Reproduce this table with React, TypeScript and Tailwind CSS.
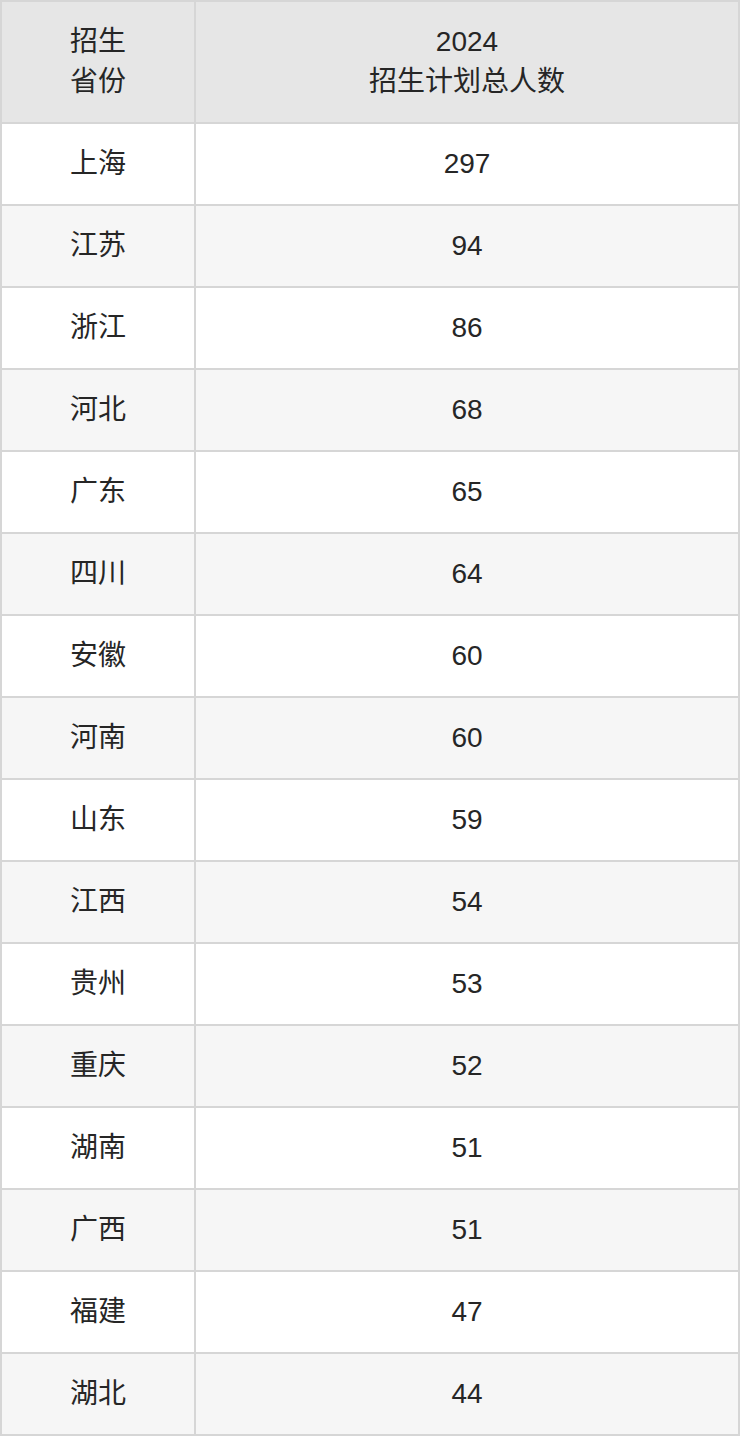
const rows: [string, number][] = [
  ["上海", 297],
  ["江苏", 94],
  ["浙江", 86],
  ["河北", 68],
  ["广东", 65],
  ["四川", 64],
  ["安徽", 60],
  ["河南", 60],
  ["山东", 59],
  ["江西", 54],
  ["贵州", 53],
  ["重庆", 52],
  ["湖南", 51],
  ["广西", 51],
  ["福建", 47],
  ["湖北", 44],
];

const cell = "flex items-center justify-center border-r-2 border-b-2 border-[#d6d6d6] text-center";

export default function App() {
  return (
    <div
      className="w-[740px] bg-white text-[28px] leading-[40px] text-[#262626]"
      style={{ fontFamily: '"Liberation Sans", "Noto Sans CJK SC", sans-serif' }}
    >
      <div className="grid grid-cols-[194px_1fr] border-t-2 border-l-2 border-[#d6d6d6]">
        <div className={`${cell} h-[122px] bg-[#e6e6e6]`}>
          <div>
            招生
            <br />
            省份
          </div>
        </div>
        <div className={`${cell} h-[122px] bg-[#e6e6e6]`}>
          <div>
            2024
            <br />
            招生计划总人数
          </div>
        </div>
        {rows.map(([province, total], i) => {
          const bg = i % 2 === 1 ? "bg-[#f6f6f6]" : "bg-white";
          return [
            <div key={`${province}-p`} className={`${cell} h-[82px] ${bg}`}>
              {province}
            </div>,
            <div key={`${province}-n`} className={`${cell} h-[82px] ${bg}`}>
              {total}
            </div>,
          ];
        })}
      </div>
    </div>
  );
}
